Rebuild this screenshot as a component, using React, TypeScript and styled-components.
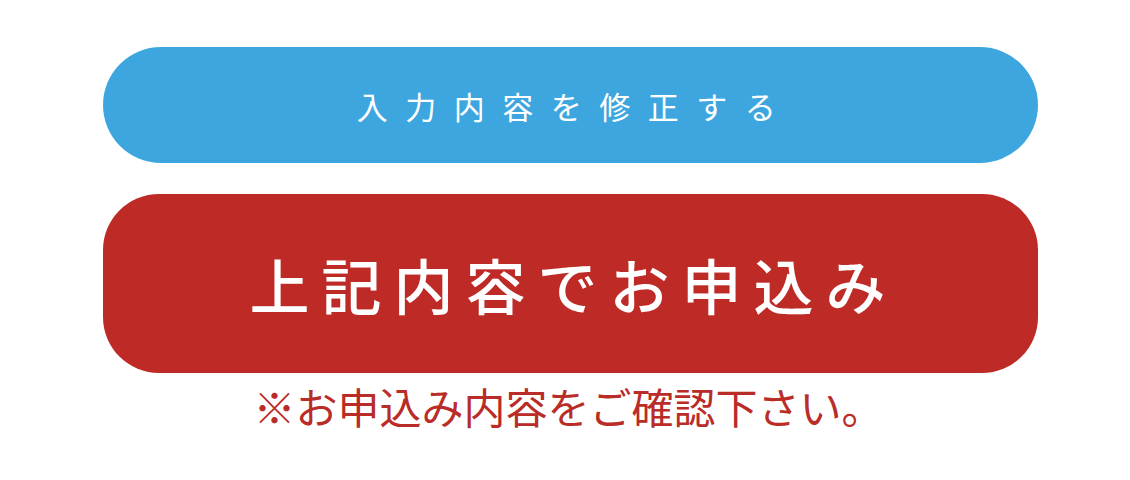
import React from 'react'
import styled, { createGlobalStyle } from 'styled-components'

const GlobalStyle = createGlobalStyle`
  html, body {
    margin: 0;
    padding: 0;
    background: #ffffff;
  }
  body {
    font-family: "Noto Sans CJK JP", "Noto Sans", sans-serif;
  }
`

const Form = styled.div`
  display: flex;
  flex-direction: column;
  align-items: stretch;
  width: 935px;
  padding: 47px 0 0 103px;
`

const ActionButton = styled.button<{ $variant: 'edit' | 'submit' }>`
  display: flex;
  align-items: center;
  justify-content: center;
  width: 100%;
  border: none;
  cursor: pointer;
  color: #ffffff;
  font-family: inherit;
  line-height: 1;
  padding: 0;
  height: ${({ $variant }) => ($variant === 'edit' ? '116px' : '179px')};
  border-radius: ${({ $variant }) => ($variant === 'edit' ? '58px' : '56px')};
  background: ${({ $variant }) => ($variant === 'edit' ? '#3ea6df' : '#be2b26')};
  font-size: ${({ $variant }) => ($variant === 'edit' ? '31px' : '60px')};
  font-weight: ${({ $variant }) => ($variant === 'edit' ? 400 : 500)};
  letter-spacing: ${({ $variant }) => ($variant === 'edit' ? '17.5px' : '12px')};
  margin-top: ${({ $variant }) => ($variant === 'edit' ? '0' : '31px')};

  span {
    margin-right: ${({ $variant }) => ($variant === 'edit' ? '-9px' : '-6px')};
  }
`

const Note = styled.p`
  margin: 8px 0 0;
  padding-right: 4px;
  text-align: center;
  color: #b92c28;
  font-size: 42px;
  line-height: 1.2;
`

export default function App() {
  return (
    <>
      <GlobalStyle />
      <Form>
        <ActionButton type="button" $variant="edit">
          <span>入力内容を修正する</span>
        </ActionButton>
        <ActionButton type="button" $variant="submit">
          <span>上記内容でお申込み</span>
        </ActionButton>
        <Note>※お申込み内容をご確認下さい。</Note>
      </Form>
    </>
  )
}
